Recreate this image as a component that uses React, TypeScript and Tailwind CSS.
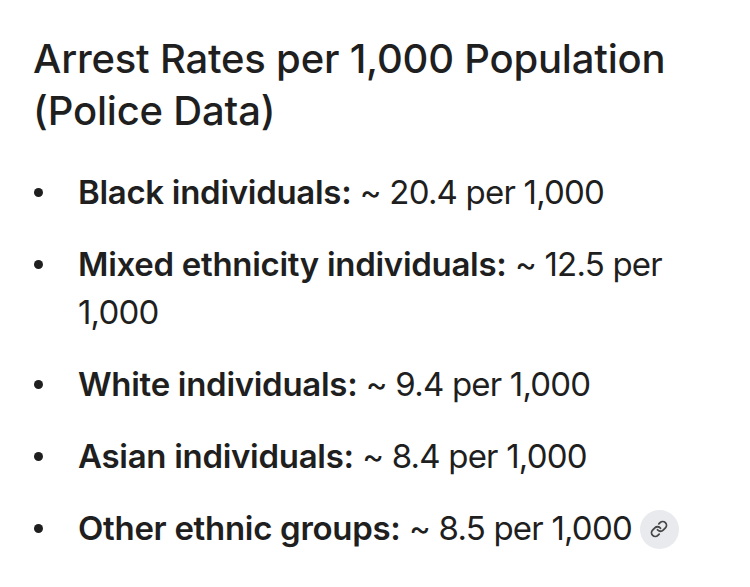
import { Link } from "lucide-react";

const rows = [
  { label: "Black individuals:", value: "~ 20.4 per 1,000" },
  { label: "Mixed ethnicity individuals:", value: "~ 12.5 per 1,000" },
  { label: "White individuals:", value: "~ 9.4 per 1,000" },
  { label: "Asian individuals:", value: "~ 8.4 per 1,000" },
  { label: "Other ethnic groups:", value: "~ 8.5 per 1,000", link: true },
];

export default function App() {
  return (
    <div className="w-[750px] h-[587px] bg-white text-[#1f1f1f] font-['Inter',sans-serif] pl-[33px] pr-[40px] pt-[33px]">
      <h1 className="text-[40px] leading-[52px] font-medium tracking-[-0.2px]">
        Arrest Rates per 1,000 Population (Police Data)
      </h1>
      <ul className="mt-[31px] flex flex-col gap-[24px]">
        {rows.map((r) => (
          <li key={r.label} className="flex">
            <span className="w-[45px] shrink-0 flex items-start pt-[20px] pl-[1px]">
              <span className="w-[9px] h-[9px] rounded-full bg-[#1f1f1f]" />
            </span>
            <p className="text-[33px] leading-[48px] tracking-[-0.8px]">
              <span className="font-semibold tracking-[-0.3px]">{r.label}</span> {r.value}
              {r.link && (
                <span className="inline-flex align-middle ml-[8px] w-[39px] h-[39px] rounded-full bg-[#e9eaee] items-center justify-center -mt-[4px]">
                  <Link className="w-[18px] h-[18px] text-[#444746]" strokeWidth={2.4} />
                </span>
              )}
            </p>
          </li>
        ))}
      </ul>
    </div>
  );
}
